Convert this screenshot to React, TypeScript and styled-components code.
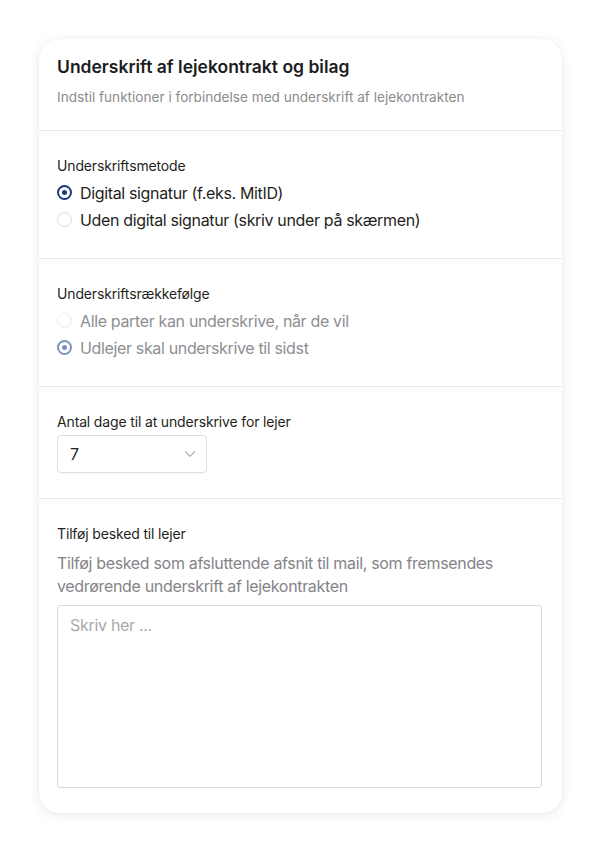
import { useState } from 'react';
import styled, { createGlobalStyle } from 'styled-components';

const GlobalStyle = createGlobalStyle`
  html, body {
    margin: 0;
    padding: 0;
    background: #ffffff;
    font-family: Inter, "Noto Sans", "Liberation Sans", sans-serif;
    -webkit-font-smoothing: antialiased;
  }
  * {
    box-sizing: border-box;
  }
`;

const Page = styled.div`
  padding: 39px 39px 40px 39px;
`;

const Card = styled.div`
  width: 523px;
  background: #ffffff;
  border-radius: 20px;
  box-shadow: 0 2px 12px rgba(0, 0, 0, 0.09), 0 0 1px rgba(0, 0, 0, 0.06);
  overflow: hidden;
`;

const Header = styled.div`
  padding: 17px 21px 24px 18px;
  border-bottom: 1px solid #e9e9e9;
  display: flex;
  flex-direction: column;
  gap: 10px;
`;

const Title = styled.h2`
  margin: 0;
  font-size: 17.5px;
  line-height: 22px;
  font-weight: 600;
  color: #1c1c1e;
`;

const Subtitle = styled.p`
  margin: 0;
  font-size: 13.6px;
  line-height: 18px;
  color: #8b8b8e;
`;

const Section = styled.div<{ $last?: boolean }>`
  padding: 25px 21px 25px 18px;
  border-bottom: ${({ $last }) => ($last ? 'none' : '1px solid #e9e9e9')};
  display: flex;
  flex-direction: column;
`;

const Label = styled.div`
  font-size: 14px;
  line-height: 20px;
  letter-spacing: -0.15px;
  color: #1f1f21;
  margin-bottom: 3px;
`;

const RadioRow = styled.label<{ $disabled?: boolean }>`
  display: flex;
  align-items: center;
  gap: 8px;
  height: 27px;
  font-size: 16px;
  letter-spacing: -0.35px;
  color: ${({ $disabled }) => ($disabled ? '#8e8e92' : '#1f1f21')};
  cursor: ${({ $disabled }) => ($disabled ? 'default' : 'pointer')};
`;

const RadioCircle = styled.span<{ $checked: boolean; $disabled?: boolean }>`
  width: 15px;
  height: 15px;
  border-radius: 50%;
  flex-shrink: 0;
  display: flex;
  align-items: center;
  justify-content: center;
  border: ${({ $checked, $disabled }) =>
    $checked
      ? `2.5px solid ${$disabled ? '#7d92bd' : '#1c3a7c'}`
      : `1.5px solid ${$disabled ? '#ececee' : '#dcdcdf'}`};
  background: #ffffff;

  &::after {
    content: '';
    width: 5px;
    height: 5px;
    border-radius: 50%;
    background: ${({ $disabled }) => ($disabled ? '#7d92bd' : '#1c3a7c')};
    display: ${({ $checked }) => ($checked ? 'block' : 'none')};
  }
`;

const SelectBox = styled.div`
  width: 150px;
  height: 38px;
  border: 1px solid #dedee1;
  border-radius: 4px;
  display: flex;
  align-items: center;
  justify-content: space-between;
  padding: 0 10px 0 12px;
  font-size: 16px;
  color: #1f1f21;
  box-shadow: 0 1px 1px rgba(0, 0, 0, 0.03);
`;

const Description = styled.p`
  margin: 5px 0 7px 0;
  font-size: 16px;
  line-height: 23px;
  letter-spacing: -0.33px;
  color: #848488;
`;

const TextArea = styled.textarea`
  width: 485px;
  height: 183px;
  border: 1px solid #d9d9dc;
  border-radius: 3px;
  padding: 9px 12px;
  font-family: inherit;
  font-size: 16px;
  line-height: 20px;
  letter-spacing: -0.3px;
  color: #1f1f21;
  resize: none;
  outline: none;

  &::placeholder {
    color: #a9a9ad;
  }
`;

type Option = { id: string; text: string };

const methods: Option[] = [
  { id: 'digital', text: 'Digital signatur (f.eks. MitID)' },
  { id: 'screen', text: 'Uden digital signatur (skriv under på skærmen)' },
];

const orders: Option[] = [
  { id: 'any', text: 'Alle parter kan underskrive, når de vil' },
  { id: 'last', text: 'Udlejer skal underskrive til sidst' },
];

const Chevron = () => (
  <svg width="12" height="8" viewBox="0 0 12 8" fill="none">
    <path d="M1.5 1.75L6 6.25L10.5 1.75" stroke="#b9b9bd" strokeWidth="1.3" strokeLinecap="round" strokeLinejoin="round" />
  </svg>
);

export default function App() {
  const [method, setMethod] = useState('digital');
  const order = 'last';

  return (
    <>
      <GlobalStyle />
      <Page>
        <Card>
          <Header>
            <Title>Underskrift af lejekontrakt og bilag</Title>
            <Subtitle>Indstil funktioner i forbindelse med underskrift af lejekontrakten</Subtitle>
          </Header>

          <Section>
            <Label>Underskriftsmetode</Label>
            {methods.map((m) => (
              <RadioRow key={m.id} onClick={() => setMethod(m.id)}>
                <RadioCircle $checked={method === m.id} />
                {m.text}
              </RadioRow>
            ))}
          </Section>

          <Section>
            <Label>Underskriftsrækkefølge</Label>
            {orders.map((o) => (
              <RadioRow key={o.id} $disabled>
                <RadioCircle $checked={order === o.id} $disabled />
                {o.text}
              </RadioRow>
            ))}
          </Section>

          <Section>
            <Label>Antal dage til at underskrive for lejer</Label>
            <SelectBox>
              <span>7</span>
              <Chevron />
            </SelectBox>
          </Section>

          <Section $last>
            <Label>Tilføj besked til lejer</Label>
            <Description>
              Tilføj besked som afsluttende afsnit til mail, som fremsendes vedrørende underskrift af lejekontrakten
            </Description>
            <TextArea placeholder="Skriv her ..." />
          </Section>
        </Card>
      </Page>
    </>
  );
}
